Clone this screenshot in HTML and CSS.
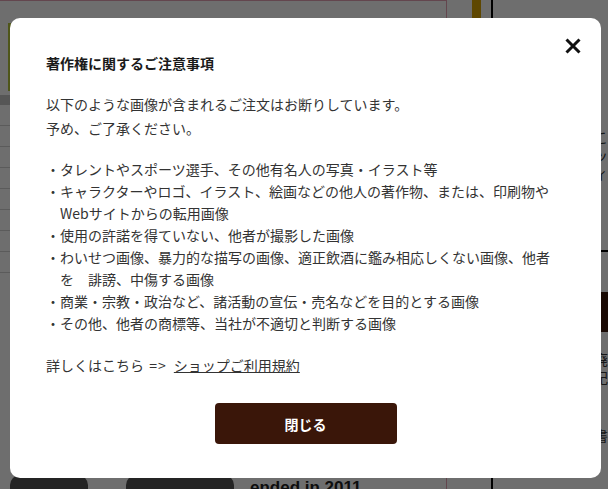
FILE: index.html
```html
<!DOCTYPE html>
<html lang="ja">
<head>
<meta charset="utf-8">
<meta name="viewport" content="width=device-width, initial-scale=1">
<title>ショップ</title>
<link rel="stylesheet" href="styles.css">
</head>
<body>

<div class="page">
  <div class="main">
    <div class="intro-box"></div>
    <div class="table">
      <div class="table-head"></div>
      <div class="row"></div>
      <div class="row"></div>
      <div class="row"></div>
      <div class="row"></div>
      <div class="row"></div>
      <div class="row"></div>
      <div class="row"></div>
      <div class="row"></div>
    </div>
    <div class="bottom">
      <span class="pill"></span>
      <span class="pill wide"></span>
      <span class="ended">ended in 2011.</span>
    </div>
  </div>
  <div class="rail"></div>
  <aside class="side">
    <p class="side-text">こ<br>ッ<br>ィ</p>
    <hr class="side-line">
    <div class="side-block"></div>
    <p class="side-text">廃<br>記</p>
    <p class="side-text low">書</p>
  </aside>
</div>

<div class="overlay">
  <div class="modal">
    <button class="close" type="button" aria-label="閉じる">
      <svg width="16" height="16" viewBox="0 0 16 16">
        <path d="M1.5 1.5 L14.5 14.5 M14.5 1.5 L1.5 14.5" stroke="#111" stroke-width="3" fill="none"/>
      </svg>
    </button>

    <h3 class="modal-title">著作権に関するご注意事項</h3>

    <p class="lead">以下のような画像が含まれるご注文はお断りしています。<br>予め、ご了承ください。</p>

    <ul class="rules">
      <li>タレントやスポーツ選手、その他有名人の写真・イラスト等</li>
      <li>キャラクターやロゴ、イラスト、絵画などの他人の著作物、または、印刷物や<br>Webサイトからの転用画像</li>
      <li>使用の許諾を得ていない、他者が撮影した画像</li>
      <li>わいせつ画像、暴力的な描写の画像、適正飲酒に鑑み相応しくない画像、他者<br>を　誹謗、中傷する画像</li>
      <li>商業・宗教・政治など、諸活動の宣伝・売名などを目的とする画像</li>
      <li>その他、他者の商標等、当社が不適切と判断する画像</li>
    </ul>

    <p class="more">詳しくはこちら <span class="arrow">=&gt;</span> <a href="#">ショップご利用規約</a></p>

    <button class="close-btn" type="button">閉じる</button>
  </div>
</div>

</body>
</html>
```

FILE: styles.css
```css
* {
  box-sizing: border-box;
}

body {
  margin: 0;
  font-family: "Noto Sans CJK JP", "Noto Sans", sans-serif;
  background-color: white;
  color: #333;
  overflow: hidden;
}

/* page behind the dialog */
.page {
  display: flex;
  height: 489px;
}

.main {
  width: 456px;
  border-right: 1px solid #e6a2b4;
  border-top: 1px solid #e6a2b4;
  display: flex;
  flex-direction: column;
}

.intro-box {
  height: 68px;
  margin: 22px 0 0 8px;
  border-left: 3px solid #b8c83a;
}

.table {
  margin-top: 4px;
}

.table-head {
  height: 10px;
  background-color: #c8c8c8;
}

.row {
  height: 21px;
  border-bottom: 1px solid #d4d4d4;
}

.bottom {
  margin-top: auto;
  height: 30px;
  display: flex;
  align-items: flex-end;
  gap: 38px;
  padding-left: 10px;
}

.pill {
  width: 78px;
  height: 24px;
  border-radius: 10px;
  background-color: #555;
  margin-bottom: -10px;
}

.pill.wide {
  width: 108px;
}

.ended {
  margin-left: -22px;
  font-family: "Liberation Sans", Arial, sans-serif;
  font-weight: bold;
  font-size: 17px;
  line-height: 20px;
  color: #222;
  margin-bottom: -9px;
}

.rail {
  width: 9px;
  margin-left: 25px;
  background-color: #d9a400;
  height: 30px;
}

.side {
  flex: 1;
  margin-left: 10px;
  border-left: 2px solid #000;
  padding-left: 101px;
  display: flex;
  flex-direction: column;
}

.side-text {
  margin: 128px 0 0 0;
  font-size: 14px;
  line-height: 18px;
  color: #333;
}

.side-line {
  margin: 68px 0 0 -4px;
  border: none;
  border-top: 2px solid #000;
}

.side-block {
  margin-top: 40px;
  height: 40px;
  background-color: #3a1609;
}

.side-text + .side-text,
.side-block + .side-text {
  margin-top: 18px;
}

.side-text.low {
  margin-top: 40px;
}

/* dialog */
.overlay {
  position: fixed;
  inset: 0;
  background-color: rgba(0, 0, 0, 0.57);
  display: flex;
  align-items: flex-start;
  padding: 18px 0 0 10px;
}

.modal {
  position: relative;
  width: 591px;
  background-color: white;
  border-radius: 10px;
  padding: 34px 36px;
  font-size: 14px;
}

.close {
  position: absolute;
  top: 20px;
  right: 20px;
  width: 16px;
  height: 16px;
  padding: 0;
  border: none;
  background: none;
  cursor: pointer;
  display: block;
}

.close svg {
  display: block;
}

.modal-title {
  margin: 0;
  font-size: 14px;
  line-height: 22px;
  font-weight: bold;
  color: #1a1a1a;
}

.lead {
  margin: 18px 0 0 0;
  line-height: 24px;
}

.rules {
  list-style: none;
  margin: 18px 0 0 0;
  padding: 0;
  line-height: 22px;
}

.rules li {
  padding-left: 14px;
  text-indent: -14px;
}

.rules li::before {
  content: "・";
}

.more {
  margin: 20px 0 0 0;
  line-height: 22px;
}

.arrow {
  margin: 0 4px 0 2px;
  letter-spacing: 1px;
}

.more a {
  color: #333;
  text-decoration: underline;
}

.close-btn {
  display: block;
  width: 182px;
  height: 41px;
  margin: 27px auto 0 auto;
  border: none;
  border-radius: 4px;
  background-color: #3a1609;
  color: white;
  font-family: inherit;
  font-size: 14px;
  font-weight: bold;
  cursor: pointer;
}
```
